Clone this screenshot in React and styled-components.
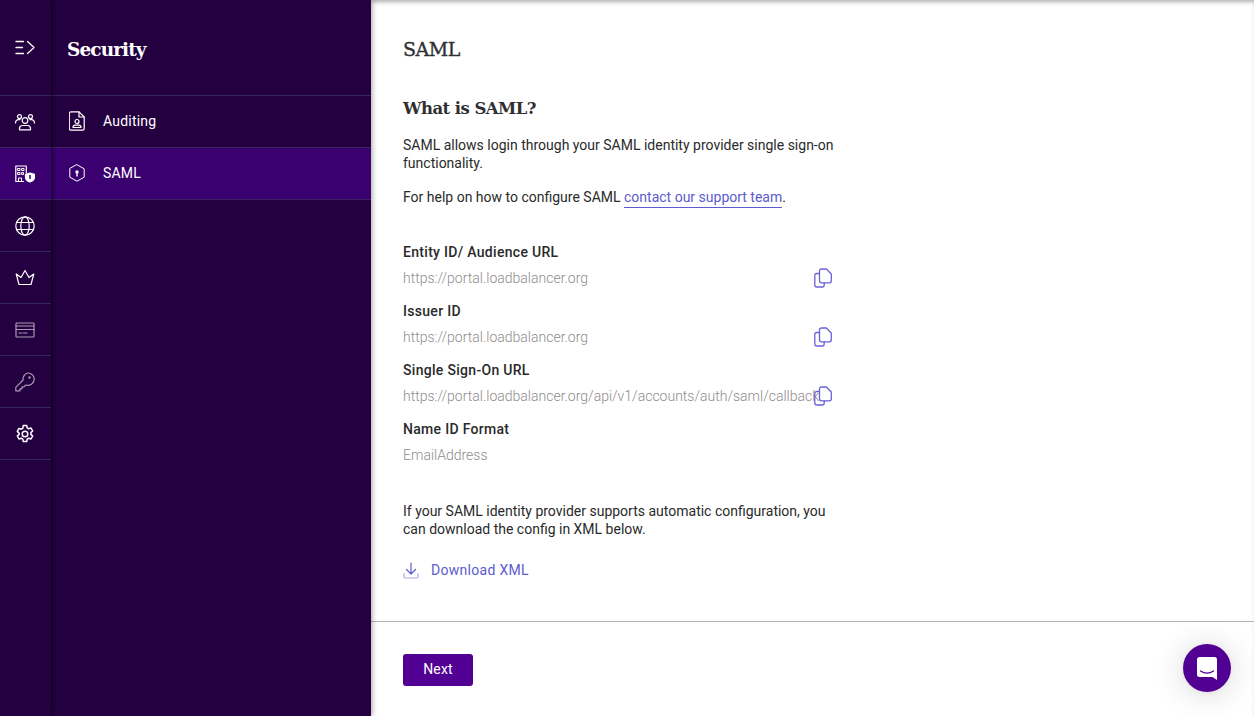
import React from 'react';
import styled, { createGlobalStyle } from 'styled-components';

const GlobalStyle = createGlobalStyle`
  html, body, #root {
    height: 100%;
  }
  body {
    margin: 0;
    font-family: Roboto, "Liberation Sans", sans-serif;
    font-size: 14px;
    color: #2a2a2a;
    background: #fff;
    overflow: hidden;
  }
  * {
    box-sizing: border-box;
  }
`;

const slab = `"DejaVu Serif", "Liberation Serif", serif`;

const Page = styled.div`
  display: flex;
  height: 716px;
  width: 1254px;
`;

const Rail = styled.nav`
  flex: 0 0 51px;
  display: flex;
  flex-direction: column;
  background: #240041;
  box-shadow: 2px 0 4px rgba(0, 0, 0, 0.55);
  position: relative;
  z-index: 2;
`;

const RailTop = styled.div`
  height: 96px;
  display: flex;
  align-items: center;
  justify-content: center;
  border-bottom: 1px solid #3a2466;
  padding: 1px 1px 0 0;
  color: #fff;
`;

const RailItem = styled.div`
  height: 52px;
  display: flex;
  align-items: center;
  justify-content: center;
  padding-right: 1px;
  border-bottom: 1px solid #3a2466;
  background: ${(p) => (p.$active ? '#3b0070' : 'transparent')};
  color: #fff;
`;

const RailGlyph = styled.span`
  display: flex;
  opacity: ${(p) => (p.$dim ? 0.6 : 1)};
`;

const Sidebar = styled.aside`
  flex: 0 0 320px;
  background: #240041;
  display: flex;
  flex-direction: column;
  box-shadow: 2px 0 5px rgba(0, 0, 0, 0.25);
  position: relative;
  z-index: 1;
`;

const SideHead = styled.div`
  height: 96px;
  display: flex;
  align-items: center;
  padding: 3px 0 0 16px;
  border-bottom: 1px solid #3a2466;
`;

const SideTitle = styled.h1`
  margin: 0;
  font-family: ${slab};
  font-weight: 700;
  font-size: 18.5px;
  letter-spacing: -0.9px;
  color: #fff;
`;

const SideItem = styled.div`
  height: 52px;
  display: flex;
  align-items: center;
  gap: 17px;
  padding-left: 17px;
  border-bottom: 1px solid #3a2466;
  background: ${(p) => (p.$active ? '#3b0070' : 'transparent')};
  color: #fff;
  font-size: 14px;
  line-height: 16px;
  letter-spacing: 0.2px;
  padding-bottom: 1px;
`;

const SideIcon = styled.span`
  width: 18px;
  display: flex;
  justify-content: center;
`;

const Main = styled.main`
  flex: 1;
  display: flex;
  flex-direction: column;
  box-shadow: inset 0 4px 4px -2px rgba(0, 0, 0, 0.32);
`;

const Content = styled.div`
  flex: 1;
  padding: 38px 32px 0;
  border-bottom: 1px solid #b5b3b6;
`;

const PageTitle = styled.h2`
  margin: 0 0 38px;
  font-family: ${slab};
  font-weight: 400;
  font-size: 19px;
  line-height: 22px;
  letter-spacing: -0.5px;
  -webkit-text-stroke: 0.35px #2f2f33;
  color: #2f2f33;
`;

const SectionTitle = styled.h3`
  margin: 0 0 16px;
  font-family: ${slab};
  font-weight: 700;
  font-size: 16.5px;
  line-height: 22px;
  letter-spacing: -0.55px;
  color: #2f2f33;
`;

const Para = styled.p`
  margin: 0 0 ${(p) => p.$after ?? 16}px;
  width: 440px;
  font-size: 14px;
  line-height: 18px;
  color: #2a2a2a;
`;

const SupportLink = styled.a`
  color: #5a5ccf;
  border-bottom: 1px solid #5a5ccf;
  padding-bottom: 2px;
`;

const Fields = styled.div`
  margin-top: 37px;
  width: 430px;
  display: flex;
  flex-direction: column;
  gap: 16px;
  margin-bottom: 39px;
`;

const Field = styled.div`
  display: flex;
  flex-direction: column;
  gap: 9px;
`;

const Label = styled.div`
  font-size: 14px;
  font-weight: 500;
  line-height: 18px;
  letter-spacing: 0.3px;
  color: #2a2a2a;
`;

const ValueRow = styled.div`
  display: flex;
  align-items: center;
  height: 16px;
`;

const Value = styled.div`
  flex: 0 0 411px;
  min-width: 0;
  white-space: nowrap;
  font-size: 14px;
  font-weight: 300;
  color: #8f8c8c;
  line-height: 16px;
`;

const CopyButton = styled.span`
  display: flex;
  color: #6b62d9;
`;

const Download = styled.a`
  display: flex;
  align-items: center;
  gap: 12px;
  margin-top: 23px;
  color: #5a5ccf;
  font-size: 14px;
  letter-spacing: 0.3px;
  line-height: 18px;
`;

const Footer = styled.div`
  height: 94px;
  flex: 0 0 94px;
  padding: 32px 32px 0;
`;

const NextButton = styled.button`
  width: 70px;
  height: 32px;
  border: none;
  border-radius: 3px;
  background: #520094;
  color: #fff;
  font-family: inherit;
  font-size: 14px;
  letter-spacing: 0.2px;
  padding-bottom: 4px;
`;

const ChatBubble = styled.div`
  position: fixed;
  right: 23px;
  bottom: 24px;
  width: 48px;
  height: 48px;
  border-radius: 50%;
  background: #520094;
  display: flex;
  align-items: center;
  justify-content: center;
  box-shadow: 0 1px 6px rgba(0, 0, 0, 0.06), 0 2px 32px rgba(0, 0, 0, 0.16);
`;

const Svg = ({ size = 20, w, h, vb, children }) => (
  <svg
    width={w || size}
    height={h || size}
    viewBox={vb || `0 0 ${size} ${size}`}
    fill="none"
    stroke="currentColor"
    strokeWidth="1.2"
    strokeLinecap="round"
    strokeLinejoin="round"
  >
    {children}
  </svg>
);

const ExpandIcon = () => (
  <Svg size={20}>
    <path d="M1 3.500h7.500M1 9.500h6.500M1 15.500h7.500M12.500 3.500l6.500 6-6.500 6" strokeWidth="1.300" />
  </Svg>
);

const UsersIcon = () => (
  <Svg size={20}>
    <circle cx="10" cy="8.500" r="2.800" />
    <path d="M4.500 17.800v-1.300c0-1.800 1.400-3 3-3h5c1.600 0 3 1.200 3 3v1.300z" />
    <circle cx="4.500" cy="4.600" r="2" />
    <circle cx="15.500" cy="4.600" r="2" />
    <path d="M.5 11c0-2 1.200-3.400 3-3.400h1.600M19.500 11c0-2-1.200-3.400-3-3.400h-1.600" />
  </Svg>
);

const BuildingShieldIcon = () => (
  <Svg w={20} h={20} vb="0 0 20 20">
    <path d="M8.500 17.500H.8V2h10.500v7" />
    <path d="M3 4.500h2v2H3zM7 4.500h2v2H7zM3 8.500h2v2H3zM7 8.500h1.500v2H7zM3.500 17.500v-3.500h3v3.500" strokeWidth="1" />
    <path d="M15 9l4.500 1.400v3c0 2.200-2 3.700-4.500 4.600-2.500-.9-4.500-2.400-4.500-4.600v-3z" fill="currentColor" />
    <path d="M15 11.500v3" stroke="#3b0070" strokeWidth="1.500" />
  </Svg>
);

const GlobeIcon = () => (
  <Svg size={20}>
    <circle cx="10" cy="10" r="9.200" />
    <ellipse cx="10" cy="10" rx="4.200" ry="9.200" />
    <path d="M1.800 6.500h16.400M1.800 13.500h16.400" />
  </Svg>
);

const CrownIcon = () => (
  <Svg w={20} h={17} vb="0 0 20 17">
    <path d="M4 15.500h12L18.800 5l-4.800 3.500L10 1.500 6 8.500 1.200 5z" />
  </Svg>
);

const CardIcon = () => (
  <Svg w={20} h={16} vb="0 0 20 16">
    <rect x="1" y="1" width="18" height="14" rx="0.800" />
    <path d="M1 4h18M1 7.500h18M4 11h2.500M8 11h4" />
  </Svg>
);

const KeyIcon = () => (
  <Svg size={20}>
    <path d="M12.800 1a6.200 6.200 0 1 1-2 12l-1.800 1.800H7v2H5v2H.8v-3.500l7.300-7.300A6.200 6.200 0 0 1 12.800 1z" />
    <circle cx="14.500" cy="5.500" r="0.600" fill="currentColor" />
  </Svg>
);

const GearIcon = () => (
  <Svg size={20}>
    <circle cx="10" cy="10" r="2.800" strokeWidth="1.500" />
    <path
      d="M8.300 1.500h3.400l.5 2.400 1.500.9 2.300-.8 1.700 3-1.800 1.600v1.800l1.800 1.600-1.700 3-2.300-.8-1.500.9-.5 2.400H8.300l-.5-2.400-1.500-.9-2.300.8-1.700-3 1.800-1.600V9.100L2.300 7.400l1.700-3 2.300.8 1.500-.9z"
      strokeWidth="1.500"
    />
  </Svg>
);

const AuditIcon = () => (
  <Svg w={16} h={20} vb="0 0 16 20">
    <path d="M2 .8h8l5.200 5.200v11.500c0 1-.7 1.700-1.700 1.700h-11.500c-1 0-1.700-.7-1.700-1.700v-15c0-1 .7-1.700 1.700-1.700z" />
    <path d="M10 .8v5.200h5.200" />
    <circle cx="8" cy="10.500" r="2" />
    <path d="M4 16.500c0-1.500 1-2.300 2.300-2.300h3.400c1.300 0 2.300.8 2.300 2.300z" />
  </Svg>
);

const HexKeyIcon = () => (
  <Svg w={16} h={18} vb="0 0 16 18">
    <path d="M8 .8l7.200 4v8.400L8 17.200.8 13.200V4.800z" strokeWidth="1" />
    <circle cx="8" cy="8" r="1.700" fill="currentColor" stroke="none" />
    <path d="M8 9v3" strokeWidth="1.400" />
  </Svg>
);

const CopyIcon = () => (
  <Svg w={18} h={20} vb="0 0 18 20">
    <path d="M7.500 1h4.800l5 5v6.800c0 1.200-.8 2-2 2H7.500c-1.200 0-2-.8-2-2V3c0-1.200.8-2 2-2z" strokeWidth="1.300" />
    <path d="M5.500 5.500H2.800c-1.200 0-2 .8-2 2V17c0 1.200.8 2 2 2h5.400c1.200 0 2-.8 2-2v-2.200" strokeWidth="1.300" />
  </Svg>
);

const DownloadIcon = () => (
  <Svg w={16} h={17} vb="0 0 16 17">
    <path d="M8 1v10.500M3.500 7.500L8 12l4.500-4.500" />
    <path d="M1 11.500v3c0 .9.600 1.500 1.500 1.500h11c.9 0 1.500-.6 1.500-1.500v-3" stroke="#a6a8e6" />
  </Svg>
);

const ChatIcon = () => (
  <svg width="20" height="23" viewBox="0 0 20 23">
    <path
      d="M2.500 0h15A2.500 2.500 0 0 1 20 2.500V23l-4.500-3H2.500A2.500 2.500 0 0 1 0 17.500v-15A2.500 2.500 0 0 1 2.500 0z"
      fill="#fff"
    />
    <path d="M3.500 14c4 2.600 9 2.600 13 0" stroke="#520094" strokeWidth="1.400" fill="none" strokeLinecap="round" />
  </svg>
);

const fields = [
  { label: 'Entity ID/ Audience URL', value: 'https://portal.loadbalancer.org', copy: true },
  { label: 'Issuer ID', value: 'https://portal.loadbalancer.org', copy: true },
  { label: 'Single Sign-On URL', value: 'https://portal.loadbalancer.org/api/v1/accounts/auth/saml/callback', copy: true },
  { label: 'Name ID Format', value: 'EmailAddress' },
];

const App = () => (
  <Page>
    <GlobalStyle />
    <Rail>
      <RailTop>
        <ExpandIcon />
      </RailTop>
      <RailItem><RailGlyph><UsersIcon /></RailGlyph></RailItem>
      <RailItem $active><RailGlyph><BuildingShieldIcon /></RailGlyph></RailItem>
      <RailItem><RailGlyph><GlobeIcon /></RailGlyph></RailItem>
      <RailItem><RailGlyph><CrownIcon /></RailGlyph></RailItem>
      <RailItem><RailGlyph $dim><CardIcon /></RailGlyph></RailItem>
      <RailItem><RailGlyph $dim><KeyIcon /></RailGlyph></RailItem>
      <RailItem><RailGlyph><GearIcon /></RailGlyph></RailItem>
    </Rail>
    <Sidebar>
      <SideHead>
        <SideTitle>Security</SideTitle>
      </SideHead>
      <SideItem>
        <SideIcon><AuditIcon /></SideIcon>
        Auditing
      </SideItem>
      <SideItem $active>
        <SideIcon><HexKeyIcon /></SideIcon>
        SAML
      </SideItem>
    </Sidebar>
    <Main>
      <Content>
        <PageTitle>SAML</PageTitle>
        <SectionTitle>What is SAML?</SectionTitle>
        <Para>SAML allows login through your SAML identity provider single sign-on functionality.</Para>
        <Para $after={0}>
          For help on how to configure SAML <SupportLink>contact our support team</SupportLink>.
        </Para>
        <Fields>
          {fields.map((f) => (
            <Field key={f.label}>
              <Label>{f.label}</Label>
              <ValueRow>
                <Value>{f.value}</Value>
                {f.copy && (
                  <CopyButton><CopyIcon /></CopyButton>
                )}
              </ValueRow>
            </Field>
          ))}
        </Fields>
        <Para $after={0}>
          If your SAML identity provider supports automatic configuration, you can download the config in XML below.
        </Para>
        <Download>
          <DownloadIcon />
          Download XML
        </Download>
      </Content>
      <Footer>
        <NextButton>Next</NextButton>
      </Footer>
    </Main>
    <ChatBubble><ChatIcon /></ChatBubble>
  </Page>
);

export default App;
